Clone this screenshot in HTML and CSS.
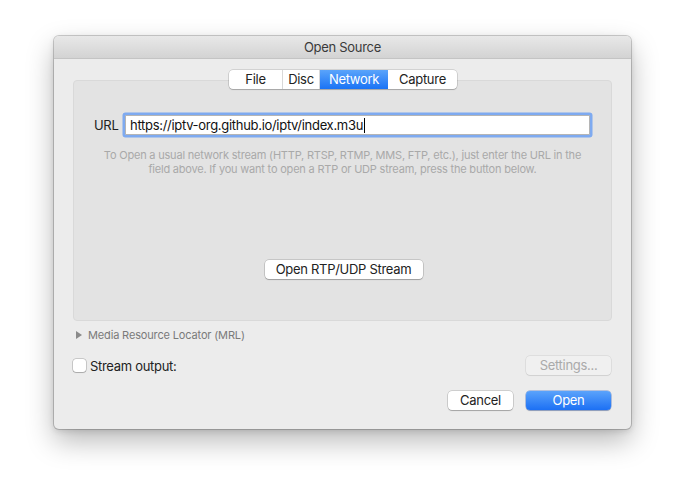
FILE: index.html
```html
<!DOCTYPE html>
<html>
<head>
<meta charset="utf-8">
<link rel="stylesheet" href="styles.css">
</head>
<body>
<div class="window">
  <div class="titlebar">Open Source</div>
  <div class="content">
    <div class="tabs">
      <div class="tab t-file">File</div>
      <div class="tab t-disc">Disc</div>
      <div class="tab t-net active">Network</div>
      <div class="tab t-cap">Capture</div>
    </div>
    <div class="group">
      <div class="url-row">
        <span class="url-label">URL</span>
        <div class="url-input">https://iptv-org.github.io/iptv/index.m3u<span class="caret"></span></div>
      </div>
      <p class="help">To Open a usual network stream (HTTP, RTSP, RTMP, MMS, FTP, etc.), just enter the URL in the<br>field above. If you want to open a RTP or UDP stream, press the button below.</p>
      <div class="rtp-row">
        <div class="btn rtp">Open RTP/UDP Stream</div>
      </div>
    </div>
    <div class="mrl"><span class="tri"></span>Media Resource Locator (MRL)</div>
    <div class="stream-row">
      <label class="check"><span class="box"></span>Stream output:</label>
      <div class="btn settings">Settings...</div>
    </div>
    <div class="actions">
      <div class="btn cancel">Cancel</div>
      <div class="btn open">Open</div>
    </div>
  </div>
</div>
</body>
</html>
```
FILE: styles.css
```css
html, body {
  margin: 0;
  padding: 0;
  background: #ffffff;
  width: 685px;
  height: 500px;
  overflow: hidden;
}
body {
  font-family: Inter, "Liberation Sans", Arial, sans-serif;
  font-size: 13px;
  letter-spacing: -0.3px;
  color: #222;
  padding-top: 36px;
  padding-left: 54px;
  box-sizing: border-box;
}
.window {
  width: 577px;
  height: 393px;
  background: #ececec;
  border-radius: 5px;
  box-shadow: 0 0 0 1px rgba(0,0,0,0.18), 0 12px 28px rgba(0,0,0,0.28), 0 2px 6px rgba(0,0,0,0.12);
  overflow: hidden;
  display: flex;
  flex-direction: column;
}
.titlebar {
  height: 22px;
  line-height: 22px;
  text-align: center;
  background: linear-gradient(#e8e8e8, #d3d3d3);
  border-bottom: 1px solid #c4c4c4;
  color: #3a3a3a;
  font-size: 13px;
}
.content {
  padding: 11px 19px 0 19px;
  display: flex;
  flex-direction: column;
  position: relative;
}
.tabs {
  display: flex;
  align-self: center;
  height: 19px;
  background: #fff;
  border-radius: 4px;
  box-shadow: 0 0 0 0.5px rgba(0,0,0,0.22), 0 1px 1px rgba(0,0,0,0.18);
  position: relative;
  z-index: 2;
  margin-left: 1px;
}
.tab {
  line-height: 19px;
  text-align: center;
  font-size: 13px;
  color: #222;
  border-right: 1px solid #d8d8d8;
}
.tab:last-child { border-right: none; }
.t-file { width: 53px; }
.t-disc { width: 36px; }
.t-net { width: 68px; }
.t-cap { width: 69px; }
.tab.active {
  background: linear-gradient(#5aa4fb, #1a73f5);
  color: #fff;
  border-right: none;
}
.group {
  margin-top: -9px;
  height: 241px;
  background: #e3e3e3;
  border: 1px solid #d9d9d9;
  border-radius: 4px;
  box-sizing: border-box;
  padding-top: 34px;
  display: flex;
  flex-direction: column;
}
.url-row {
  display: flex;
  align-items: center;
  padding-left: 20px;
}
.url-label {
  width: 30px;
  color: #222;
}
.url-input {
  width: 459px;
  height: 18px;
  line-height: 18px;
  background: #fff;
  border: 1px solid #b5b5b5;
  box-shadow: 0 0 0 2.5px #7eaaf0;
  border-radius: 1px;
  padding-left: 4px;
  font-size: 13px;
  color: #111;
  margin-left: 1px;
}
.caret {
  display: inline-block;
  width: 1px;
  height: 15px;
  background: #000;
  vertical-align: -3px;
  margin-left: 1px;
}
.help {
  margin: 13px 10px 0 10px;
  text-align: center;
  font-size: 11px;
  letter-spacing: -0.2px;
  line-height: 14px;
  color: #a9a9a9;
  white-space: nowrap;
}
.rtp-row {
  display: flex;
  justify-content: center;
  margin-top: 84px;
}
.btn {
  height: 19px;
  line-height: 19px;
  text-align: center;
  background: #fff;
  border-radius: 4px;
  box-shadow: 0 0 0 0.5px rgba(0,0,0,0.25), 0 1px 1px rgba(0,0,0,0.2);
  font-size: 13px;
  color: #222;
}
.rtp {
  width: 158px;
  margin-left: 2px;
}
.mrl {
  margin-top: 7px;
  padding-left: 3px;
  font-size: 11px;
  letter-spacing: -0.15px;
  color: #7a7a7a;
  display: flex;
  align-items: center;
  height: 14px;
}
.tri {
  width: 0;
  height: 0;
  border-left: 6px solid #8a8a8a;
  border-top: 4px solid transparent;
  border-bottom: 4px solid transparent;
  margin-right: 6px;
}
.stream-row {
  display: flex;
  justify-content: space-between;
  align-items: center;
  margin-top: 14px;
}
.check {
  display: flex;
  align-items: center;
  color: #222;
  font-size: 13px;
}
.box {
  width: 13px;
  height: 13px;
  background: #fff;
  border-radius: 3px;
  box-shadow: 0 0 0 0.5px rgba(0,0,0,0.3), 0 1px 1px rgba(0,0,0,0.15);
  margin-right: 4px;
}
.settings {
  width: 85px;
  color: #aaa;
  background: #f0f0f0;
  box-shadow: 0 0 0 0.5px rgba(0,0,0,0.12), 0 1px 1px rgba(0,0,0,0.06);
  margin-right: 1px;
}
.actions {
  display: flex;
  justify-content: flex-end;
  gap: 13px;
  margin-top: 16px;
}
.cancel {
  width: 65px;
}
.open {
  width: 85px;
  margin-right: 1px;
  background: linear-gradient(#5ba3fb, #1c70f4);
  color: #fff;
  box-shadow: 0 0 0 0.5px rgba(0,60,180,0.5), 0 1px 1px rgba(0,0,0,0.2);
}
```
